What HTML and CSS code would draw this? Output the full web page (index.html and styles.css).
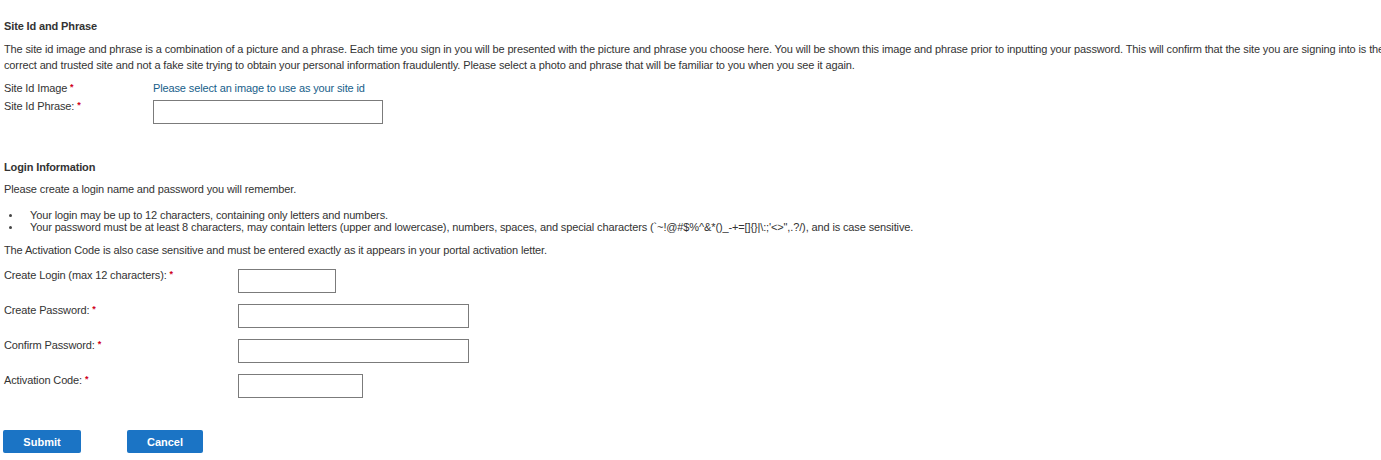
FILE: index.html
```html
<!DOCTYPE html>
<html lang="en">
	<head>
		<meta charset="utf-8" />
		<link rel="stylesheet" href="styles.css">
	</head>
	<body>
		<form id="form">
			<h2>Site Id and Phrase</h2>
			<p class="intro">The site id image and phrase is a combination of a picture and a phrase. Each time you sign in you will be presented with the picture and phrase you choose here. You will be shown this image and phrase prior to inputting your password. This will confirm that the site you are signing into is the<br>correct and trusted site and not a fake site trying to obtain your personal information fraudulently. Please select a photo and phrase that will be familiar to you when you see it again.</p>
			<div class="row site">
				<label>Site Id Image <span class="req">*</span></label>
				<a id="siteimage" href="#">Please select an image to use as your site id</a>
			</div>
			<div class="row site">
				<label for="phrase">Site Id Phrase: <span class="req">*</span></label>
				<input type="text" id="phrase" class="w230" />
			</div>

			<h2 class="login">Login Information</h2>
			<p>Please create a login name and password you will remember.</p>
			<ul>
				<li>Your login may be up to 12 characters, containing only letters and numbers.</li>
				<li>Your password must be at least 8 characters, may contain letters (upper and lowercase), numbers, spaces, and special characters (`~!@#$%^&amp;*()_-+=[]{}|\:;'&lt;&gt;",.?/), and is case sensitive.</li>
			</ul>
			<p>The Activation Code is also case sensitive and must be entered exactly as it appears in your portal activation letter.</p>

			<div class="row field">
				<label for="login">Create Login (max 12 characters): <span class="req">*</span></label>
				<input type="text" id="login" class="w98" maxlength="12" />
			</div>
			<div class="row field">
				<label for="password">Create Password: <span class="req">*</span></label>
				<input type="password" id="password" class="w231" />
			</div>
			<div class="row field">
				<label for="confirm">Confirm Password: <span class="req">*</span></label>
				<input type="password" id="confirm" class="w231" />
			</div>
			<div class="row field">
				<label for="code">Activation Code: <span class="req">*</span></label>
				<input type="text" id="code" class="w125" />
			</div>

			<div id="buttons">
				<input id="submit" type="submit" value="Submit" />
				<input id="cancel" type="button" value="Cancel" />
			</div>
		</form>
	</body>
</html>
```

FILE: styles.css
```css
html, body {
	margin: 0;
	padding: 0;
	width: 100%;
	height: 100%;
	overflow: hidden;
}
body {
	font-family: "Liberation Sans", Arial, Helvetica, sans-serif;
	font-size: 11px;
	letter-spacing: -0.13px;
	color: #333;
	background-color: #fff;
}
#form {
	padding: 18px 0 0 4px;
}
h2 {
	margin: 0;
	font-size: 11px;
	font-weight: bold;
	line-height: 16px;
	color: #333;
}
h2.login {
	margin-top: 35px;
}
p {
	margin: 6px 0 0;
	line-height: 16px;
}
p.intro {
	margin-top: 7px;
	white-space: nowrap;
}
.row {
	display: flex;
	align-items: flex-start;
	line-height: 12px;
}
.row label {
	flex: none;
}
.site {
	margin-top: 6px;
}
.site:first-of-type {
	margin-top: 9px;
}
.site label {
	width: 149px;
}
.field {
	margin-top: 11px;
}
.field label {
	width: 234px;
}
.req {
	color: #d0021b;
	font-size: 9px;
	font-weight: bold;
	vertical-align: top;
	line-height: 10px;
}
#siteimage {
	color: #17608a;
	text-decoration: none;
}
input[type=text], input[type=password] {
	box-sizing: border-box;
	height: 24px;
	margin: 0;
	padding: 2px 4px;
	border: 1px solid #7b7b7b;
	border-radius: 0;
	font-family: inherit;
	font-size: 11px;
}
.w98 { width: 98px; }
.w125 { width: 125px; }
.w230 { width: 230px; }
.w231 { width: 231px; }
ul {
	margin: 12px 0 0;
	padding: 0 0 0 5px;
	list-style: none;
}
li {
	display: flex;
	align-items: center;
	line-height: 12px;
}
li::before {
	content: "";
	flex: none;
	width: 3px;
	height: 3px;
	margin-right: 18px;
	border-radius: 50%;
	background-color: #444;
}
ul + p {
	margin-top: 9px;
}
#buttons {
	display: flex;
	gap: 46px;
	margin: 32px 0 0 -1px;
}
#buttons input {
	height: 23px;
	margin: 0;
	padding: 0;
	border: none;
	border-radius: 2px;
	background-color: #1b74c5;
	color: #fff;
	font-family: inherit;
	font-size: 11px;
	font-weight: bold;
	letter-spacing: 0;
	cursor: pointer;
}
#submit {
	width: 78px;
}
#cancel {
	width: 76px;
}
```
